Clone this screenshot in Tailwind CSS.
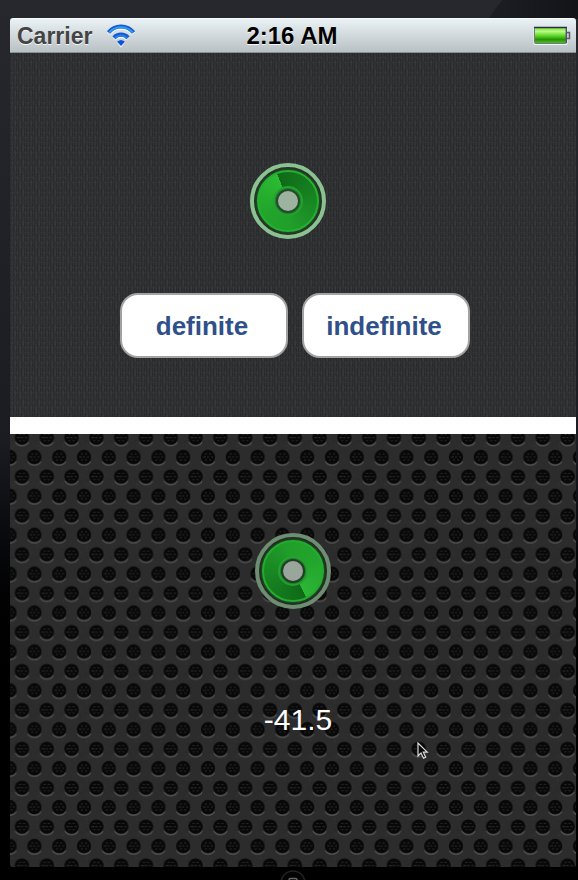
<!DOCTYPE html>
<html lang="en">
<head>
<meta charset="utf-8">
<meta name="viewport" content="width=device-width, initial-scale=1">
<title>Progress dials</title>
<script src="https://cdn.jsdelivr.net/npm/@tailwindcss/browser@4"></script>
</head>
<body class="relative flex min-h-screen flex-col overflow-x-hidden bg-linear-to-b from-[#27282e] via-[#1a1c22] via-50% to-black to-80% pt-[18px] pr-[2px] pb-[13px] pl-[10px] font-['Liberation_Sans',Arial,sans-serif]">
<!-- Device glass reflection and home button -->
<svg class="absolute top-0 right-0" width="90" height="19" viewBox="0 0 90 19" aria-hidden="true"><defs><linearGradient id="gl"><stop offset="0" stop-color="#1d1e23"/><stop offset="1" stop-color="#131418"/></linearGradient></defs><path d="M14 0H90V19H0Z" fill="url(#gl)"/></svg>
<svg class="absolute bottom-0 left-1/2 ml-[-10px]" width="28" height="10" viewBox="0 0 28 10" aria-hidden="true"><circle cx="14" cy="13" r="12" fill="#030303" stroke="#222" stroke-width="1.500"/><path d="M10 10q0-1.500 1.500-1.500h5q1.500 0 1.500 1.500" fill="none" stroke="#666" stroke-width="1.500"/></svg>

<main class="relative flex grow flex-col overflow-hidden rounded-[3px]">
  <header class="grid h-[35px] grid-cols-3 items-center border-t border-b border-t-[#f7fbfc] border-b-[#8b9193] bg-linear-to-b from-[#eaf2f5] to-[#bac1c4] pr-[5px] pl-[7px]">
    <div class="flex items-center gap-[14px]">
      <span class="text-[23px] leading-7 font-bold text-[#444] text-shadow-[0_1px_0_#f4f8fa]">Carrier</span>
      <svg width="30" height="24" viewBox="0 0 30 24" role="img" aria-label="Wi-Fi">
        <g fill="none" stroke="#f6fafc" stroke-width="4.500" transform="translate(0 1)"><path d="M2.500 8.500A16 16 0 0 1 27.500 8.500M8 13.800A9.500 9.500 0 0 1 22 13.800"/></g>
        <path d="M10.500 18q4.500-4 9 0L15 23.500Z" fill="#f6fafc"/>
        <g fill="none" stroke="#1459cd" stroke-width="4.200"><path d="M2.500 8.500A16 16 0 0 1 27.500 8.500M8 13.800A9.500 9.500 0 0 1 22 13.800"/></g>
        <g fill="none" stroke="#309bf5" stroke-width="2"><path d="M3.200 8.500A16 16 0 0 1 26.800 8.500"/></g>
        <path d="M8.800 13.800A9.500 9.500 0 0 1 21.200 13.800" fill="none" stroke="#2582f0" stroke-width="2"/>
        <path d="M11 17.800Q15 14 19 17.800L15 22Z" fill="#0d55d6"/>
      </svg>
    </div>
    <time class="pr-1 text-center text-2xl leading-7 font-bold text-black text-shadow-[0_1px_0_#f4f8fa]">2:16 AM</time>
    <svg class="justify-self-end" width="38" height="20" viewBox="0 0 38 20" role="img" aria-label="Battery full">
      <defs><linearGradient id="bt" x1="0" y1="0" x2="0" y2="1"><stop offset="0" stop-color="#78e23c"/><stop offset=".25" stop-color="#b8fb83"/><stop offset=".5" stop-color="#65d82d"/><stop offset=".75" stop-color="#259505"/><stop offset="1" stop-color="#55c41c"/></linearGradient></defs>
      <rect x=".5" y="1" width="34" height="18" rx="1.500" fill="#eef4f7"/>
      <rect x="1.500" y="1.500" width="32" height="16" rx="1" fill="url(#bt)" stroke="#77748a"/>
      <path d="M1 1.500H34" stroke="#292c46" stroke-width="1.600"/><path d="M33.300 2V17" stroke="#53516a" stroke-width="1.400"/>
      <path d="M34 6.500H36.500V12.500H34" fill="#c7ccd4" stroke="#5d5a6c" stroke-width="1.500"/>
    </svg>
  </header>

  <section class="relative flex h-[364px] flex-col items-center bg-[#2d2f30] pt-[110px]">
    <svg class="absolute inset-0 h-full w-full" aria-hidden="true">
      <defs><pattern id="cloth" width="16" height="15" patternUnits="userSpaceOnUse">
        <rect width="16" height="15" fill="#303233"/>
        <path d="M.5 0V15M3.500 0V15M6.500 0V15M8.500 0V15M11.500 0V15M14.500 0V15" stroke="#282a2b" stroke-dasharray="4 1"/>
        <path d="M2.500 1V6M5.500 8V13M7.500 3V7M10.500 10V15M13.500 2V8M15.500 9V12" stroke="#37393a"/>
        <path d="M1 3h2M5 6h2M9 4h2M13 11h2M3 12h2M7 14h2" stroke="#28292a"/>
      </pattern></defs>
      <rect width="100%" height="100%" fill="url(#cloth)"/>
    </svg>
    <div class="relative pr-[10px]">
      <div class="grid size-[76px] place-items-center rounded-full border-4 border-[#8cc291] bg-[#263228]" role="progressbar" aria-label="Definite progress">
        <div class="grid size-[62px] place-items-center rounded-full border-2 border-[#25b12f] bg-[conic-gradient(from_-22deg,#0f6a18,#168021_25%,#1d9427_45%,#209f2a_55%,#22a52c_75%,#2bbb33)] shadow-[0_0_2px_1px_#1c5422]">
          <div class="grid size-[30px] place-items-center rounded-full border-2 border-[#25a12e] bg-[#18812a]">
            <div class="size-6 rounded-full border-2 border-[#254b2a] bg-[#9cb39f]"></div>
          </div>
        </div>
      </div>
    </div>
    <div class="relative mt-[54px] flex gap-[14px] pl-1">
      <button type="button" class="h-[65px] w-[168px] rounded-[18px] border-2 border-[#a3a3a3] bg-white pr-1 text-[26px] leading-8 font-bold text-[#30508a]">definite</button>
      <button type="button" class="h-[65px] w-[168px] rounded-[18px] border-2 border-[#a3a3a3] bg-white pr-1 text-[26px] leading-8 font-bold text-[#30508a]">indefinite</button>
    </div>
  </section>

  <div class="h-[17px] bg-white"></div>

  <section class="relative flex grow flex-col items-center bg-[#2c2c2c] pt-[99px]">
    <svg class="absolute inset-0 h-full w-full" aria-hidden="true">
      <defs>
        <g id="hole">
          <path d="M-6.500 4.500A7.700 7.700 0 0 0 6.500 4.500" fill="none" stroke="#505050" stroke-width="1.500"/>
          <circle r="7.200" fill="#080808"/>
          <path d="M-3-3h2M1-3h2M-5 0h3M-1 0h2M3 0h2M-3 3h2M1 3h2" stroke="#292929"/>
        </g>
        <pattern id="mesh" x="-.4" y="-6" width="24.800" height="38.900" patternUnits="userSpaceOnUse">
          <rect width="24.800" height="38.900" fill="#2c2c2c"/>
          <path d="M2 2h2M20 8h2M3 18h2M20 23h2M7 29h1M16 17h2M1 34h2" stroke="#333"/>
          <path d="M4 5h2M21 15h2M1 13h2M6 23h2M18 34h2" stroke="#262626"/>
          <use href="#hole" x="12.400" y="9.600"/>
          <use href="#hole" x="0" y="29"/>
          <use href="#hole" x="24.800" y="29"/>
        </pattern>
      </defs>
      <rect width="100%" height="100%" fill="url(#mesh)"/>
    </svg>
    <div class="relative grid size-[76px] place-items-center rounded-full border-4 border-[#6f8d72] bg-[#222b23]" role="progressbar" aria-label="Indefinite progress">
      <div class="grid size-[62px] place-items-center rounded-full border-2 border-[#24ac2e] bg-[conic-gradient(from_153deg,#0f6a18,#168021_25%,#1d9427_45%,#209f2a_55%,#22a52c_75%,#2db536)] shadow-[0_0_2px_1px_#1c5422]">
        <div class="grid size-[30px] place-items-center rounded-full border-2 border-[#25a12e] bg-[#18812a]">
          <div class="size-6 rounded-full border-2 border-[#233d27] bg-[#9aa69c]"></div>
        </div>
      </div>
    </div>
    <output class="relative mt-[93px] pl-[10px] text-[30px] leading-9 text-white">-41.5</output>
    <svg class="absolute top-[308px] left-[407px]" width="12" height="18" viewBox="0 0 12 18" aria-hidden="true"><path d="M1 1V14L4 11L6.500 16.300L8.700 15.300L6.300 10.200H10.200Z" fill="#080808" stroke="#ddd" stroke-width="1.200"/></svg>
  </section>
</main>
</body>
</html>
